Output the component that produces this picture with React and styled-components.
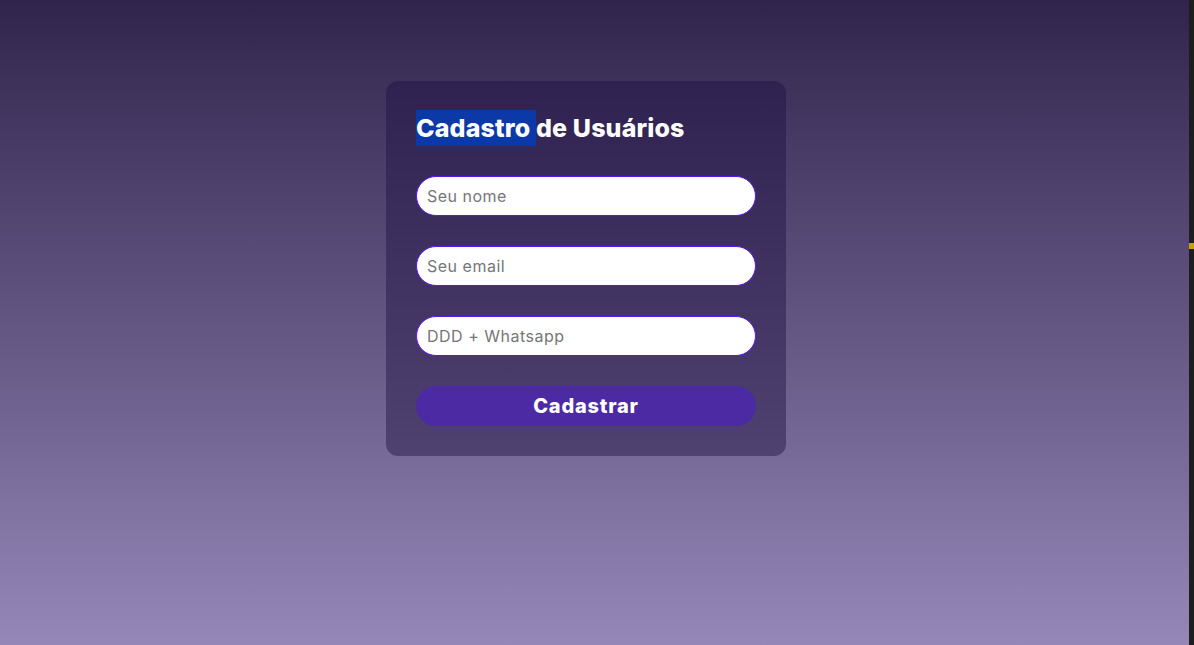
import React from "react";
import styled, { createGlobalStyle } from "styled-components";

const GlobalStyle = createGlobalStyle`
  * {
    box-sizing: border-box;
  }
  html, body {
    margin: 0;
    padding: 0;
    height: 100%;
  }
  body {
    font-family: "Inter", "Noto Sans", sans-serif;
    background: linear-gradient(to bottom, #31244c 0%, #9587b8 100%);
    overflow: hidden;
  }
`;

const Page = styled.div`
  display: flex;
  width: 1194px;
  height: 645px;
`;

const Main = styled.main`
  flex: 1;
  display: flex;
  justify-content: center;
  align-items: flex-start;
  padding: 81px 17px 0 0;
`;

const Card = styled.form`
  width: 400px;
  padding: 30px;
  border-radius: 12px;
  background: linear-gradient(to bottom, #2f2250 0%, #4f4271 100%);
  display: flex;
  flex-direction: column;
`;

const Title = styled.h1`
  margin: 0 0 30px;
  font-size: 25px;
  line-height: 35px;
  font-weight: 800;
  color: #ffffff;
  letter-spacing: 0.15px;

  span {
    background: #0b3aa8;
    padding: 3px 0;
  }
`;

const Field = styled.input`
  width: 340px;
  height: 40px;
  margin-bottom: 30px;
  padding: 0 10px;
  border: 1px solid #5b16ee;
  border-radius: 20px;
  background: #ffffff;
  font-family: inherit;
  font-size: 16px;
  letter-spacing: 0.5px;
  color: #333;
  outline: none;

  &::placeholder {
    color: #767676;
  }
`;

const Submit = styled.button`
  width: 340px;
  height: 40px;
  border: none;
  border-radius: 20px;
  background: #4b2aa4;
  color: #ffffff;
  font-family: inherit;
  font-size: 20px;
  font-weight: 800;
  letter-spacing: 0.8px;
  cursor: pointer;
`;

const Gutter = styled.div`
  width: 5px;
  background: #1e1e1e;
  display: flex;
  flex-direction: column;
  padding-top: 243px;

  &::after {
    content: "";
    display: block;
    height: 6px;
    background: #c7a10a;
  }
`;

export default function App() {
  return (
    <>
      <GlobalStyle />
      <Page>
        <Main>
          <Card onSubmit={(e) => e.preventDefault()}>
            <Title>
              <span>Cadastro </span>de Usuários
            </Title>
            <Field type="text" placeholder="Seu nome" />
            <Field type="email" placeholder="Seu email" />
            <Field type="tel" placeholder="DDD + Whatsapp" />
            <Submit type="submit">Cadastrar</Submit>
          </Card>
        </Main>
        <Gutter />
      </Page>
    </>
  );
}
